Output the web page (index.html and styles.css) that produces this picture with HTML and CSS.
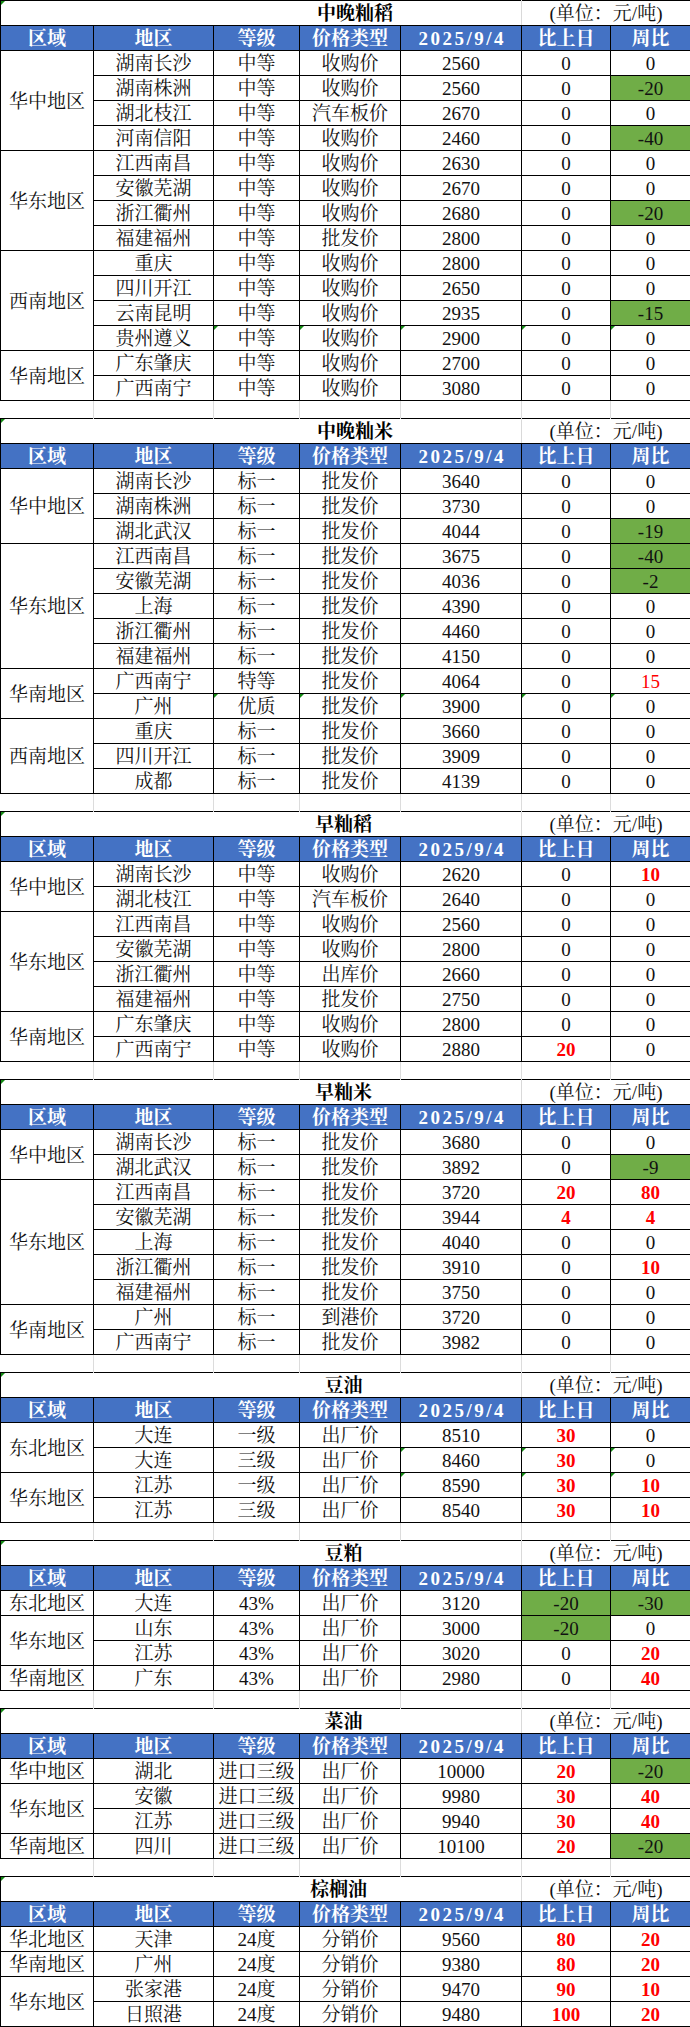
FILE: index.html
```html
<!DOCTYPE html>
<html lang="zh-CN">
<head>
<meta charset="utf-8">
<title>价格表</title>
<link rel="stylesheet" href="styles.css">
</head>
<body>
<table class="sheet">
<colgroup>
<col class="c1"><col class="c2"><col class="c3"><col class="c4"><col class="c5"><col class="c6"><col class="c7">
</colgroup>
<tbody>
<!-- 中晚籼稻 -->
<tr class="title"><td colspan="5" class="ttl w4 t">中晚籼稻</td><td colspan="2" class="unit">(单位：元/吨)</td></tr>
<tr class="head"><th>区域</th><th>地区</th><th>等级</th><th>价格类型</th><th class="dt">2025/9/4</th><th>比上日</th><th>周比</th></tr>
<tr><td rowspan="4">华中地区</td><td>湖南长沙</td><td>中等</td><td>收购价</td><td>2560</td><td>0</td><td>0</td></tr>
<tr><td>湖南株洲</td><td>中等</td><td>收购价</td><td>2560</td><td>0</td><td class="g">-20</td></tr>
<tr><td>湖北枝江</td><td>中等</td><td>汽车板价</td><td>2670</td><td>0</td><td>0</td></tr>
<tr><td>河南信阳</td><td>中等</td><td>收购价</td><td>2460</td><td>0</td><td class="g">-40</td></tr>
<tr><td rowspan="4">华东地区</td><td>江西南昌</td><td>中等</td><td>收购价</td><td>2630</td><td>0</td><td>0</td></tr>
<tr><td>安徽芜湖</td><td>中等</td><td>收购价</td><td>2670</td><td>0</td><td>0</td></tr>
<tr><td>浙江衢州</td><td>中等</td><td>收购价</td><td>2680</td><td>0</td><td class="g">-20</td></tr>
<tr><td>福建福州</td><td>中等</td><td>批发价</td><td>2800</td><td>0</td><td>0</td></tr>
<tr><td rowspan="4">西南地区</td><td>重庆</td><td>中等</td><td>收购价</td><td>2800</td><td>0</td><td>0</td></tr>
<tr><td>四川开江</td><td>中等</td><td>收购价</td><td>2650</td><td>0</td><td>0</td></tr>
<tr><td>云南昆明</td><td>中等</td><td>收购价</td><td>2935</td><td>0</td><td class="g">-15</td></tr>
<tr><td>贵州遵义</td><td class="t">中等</td><td class="t">收购价</td><td class="t">2900</td><td class="t">0</td><td class="t">0</td></tr>
<tr><td rowspan="2">华南地区</td><td>广东肇庆</td><td>中等</td><td>收购价</td><td>2700</td><td>0</td><td>0</td></tr>
<tr><td>广西南宁</td><td>中等</td><td>收购价</td><td>3080</td><td>0</td><td>0</td></tr>
<tr class="gap"><td></td><td></td><td></td><td></td><td></td><td></td><td></td></tr>
<!-- 中晚籼米 -->
<tr class="title"><td colspan="5" class="ttl w4 t">中晚籼米</td><td colspan="2" class="unit">(单位：元/吨)</td></tr>
<tr class="head"><th>区域</th><th>地区</th><th>等级</th><th>价格类型</th><th class="dt">2025/9/4</th><th>比上日</th><th>周比</th></tr>
<tr><td rowspan="3">华中地区</td><td>湖南长沙</td><td>标一</td><td>批发价</td><td>3640</td><td>0</td><td>0</td></tr>
<tr><td>湖南株洲</td><td>标一</td><td>批发价</td><td>3730</td><td>0</td><td>0</td></tr>
<tr><td>湖北武汉</td><td>标一</td><td>批发价</td><td>4044</td><td>0</td><td class="g">-19</td></tr>
<tr><td rowspan="5">华东地区</td><td>江西南昌</td><td>标一</td><td>批发价</td><td>3675</td><td>0</td><td class="g">-40</td></tr>
<tr><td>安徽芜湖</td><td>标一</td><td>批发价</td><td>4036</td><td>0</td><td class="g">-2</td></tr>
<tr><td>上海</td><td>标一</td><td>批发价</td><td>4390</td><td>0</td><td>0</td></tr>
<tr><td>浙江衢州</td><td>标一</td><td>批发价</td><td>4460</td><td>0</td><td>0</td></tr>
<tr><td>福建福州</td><td>标一</td><td>批发价</td><td>4150</td><td>0</td><td>0</td></tr>
<tr><td rowspan="2">华南地区</td><td>广西南宁</td><td>特等</td><td>批发价</td><td>4064</td><td>0</td><td class="rn">15</td></tr>
<tr><td>广州</td><td class="t">优质</td><td class="t">批发价</td><td class="t">3900</td><td class="t">0</td><td class="t">0</td></tr>
<tr><td rowspan="3">西南地区</td><td>重庆</td><td>标一</td><td>批发价</td><td>3660</td><td>0</td><td>0</td></tr>
<tr><td>四川开江</td><td>标一</td><td>批发价</td><td>3909</td><td>0</td><td>0</td></tr>
<tr><td>成都</td><td>标一</td><td>批发价</td><td>4139</td><td>0</td><td>0</td></tr>
<tr class="gap"><td></td><td></td><td></td><td></td><td></td><td></td><td></td></tr>
<!-- 早籼稻 -->
<tr class="title"><td colspan="5" class="ttl t">早籼稻</td><td colspan="2" class="unit">(单位：元/吨)</td></tr>
<tr class="head"><th>区域</th><th>地区</th><th>等级</th><th>价格类型</th><th class="dt">2025/9/4</th><th>比上日</th><th>周比</th></tr>
<tr><td rowspan="2">华中地区</td><td>湖南长沙</td><td>中等</td><td>收购价</td><td>2620</td><td>0</td><td class="r">10</td></tr>
<tr><td>湖北枝江</td><td>中等</td><td>汽车板价</td><td>2640</td><td>0</td><td>0</td></tr>
<tr><td rowspan="4">华东地区</td><td>江西南昌</td><td>中等</td><td>收购价</td><td>2560</td><td>0</td><td>0</td></tr>
<tr><td>安徽芜湖</td><td>中等</td><td>收购价</td><td>2800</td><td>0</td><td>0</td></tr>
<tr><td>浙江衢州</td><td>中等</td><td>出库价</td><td>2660</td><td>0</td><td>0</td></tr>
<tr><td>福建福州</td><td>中等</td><td>批发价</td><td>2750</td><td>0</td><td>0</td></tr>
<tr><td rowspan="2">华南地区</td><td>广东肇庆</td><td>中等</td><td>收购价</td><td>2800</td><td>0</td><td>0</td></tr>
<tr><td>广西南宁</td><td>中等</td><td>收购价</td><td>2880</td><td class="r">20</td><td>0</td></tr>
<tr class="gap"><td></td><td></td><td></td><td></td><td></td><td></td><td></td></tr>
<!-- 早籼米 -->
<tr class="title"><td colspan="5" class="ttl t">早籼米</td><td colspan="2" class="unit">(单位：元/吨)</td></tr>
<tr class="head"><th>区域</th><th>地区</th><th>等级</th><th>价格类型</th><th class="dt">2025/9/4</th><th>比上日</th><th>周比</th></tr>
<tr><td rowspan="2">华中地区</td><td>湖南长沙</td><td>标一</td><td>批发价</td><td>3680</td><td>0</td><td>0</td></tr>
<tr><td>湖北武汉</td><td>标一</td><td>批发价</td><td>3892</td><td>0</td><td class="g">-9</td></tr>
<tr><td rowspan="5">华东地区</td><td>江西南昌</td><td>标一</td><td>批发价</td><td>3720</td><td class="r">20</td><td class="r">80</td></tr>
<tr><td>安徽芜湖</td><td>标一</td><td>批发价</td><td>3944</td><td class="r">4</td><td class="r">4</td></tr>
<tr><td>上海</td><td>标一</td><td>批发价</td><td>4040</td><td>0</td><td>0</td></tr>
<tr><td>浙江衢州</td><td>标一</td><td>批发价</td><td>3910</td><td>0</td><td class="r">10</td></tr>
<tr><td>福建福州</td><td>标一</td><td>批发价</td><td>3750</td><td>0</td><td>0</td></tr>
<tr><td rowspan="2">华南地区</td><td>广州</td><td>标一</td><td>到港价</td><td>3720</td><td>0</td><td>0</td></tr>
<tr><td>广西南宁</td><td>标一</td><td>批发价</td><td>3982</td><td>0</td><td>0</td></tr>
<tr class="gap"><td></td><td></td><td></td><td></td><td></td><td></td><td></td></tr>
<!-- 豆油 -->
<tr class="title"><td colspan="5" class="ttl t">豆油</td><td colspan="2" class="unit">(单位：元/吨)</td></tr>
<tr class="head"><th>区域</th><th>地区</th><th>等级</th><th>价格类型</th><th class="dt">2025/9/4</th><th>比上日</th><th>周比</th></tr>
<tr><td rowspan="2">东北地区</td><td>大连</td><td>一级</td><td>出厂价</td><td>8510</td><td class="r">30</td><td>0</td></tr>
<tr><td>大连</td><td>三级</td><td>出厂价</td><td class="t">8460</td><td class="r t">30</td><td class="t">0</td></tr>
<tr><td rowspan="2">华东地区</td><td>江苏</td><td>一级</td><td>出厂价</td><td class="t">8590</td><td class="r t">30</td><td class="r t">10</td></tr>
<tr><td>江苏</td><td>三级</td><td>出厂价</td><td>8540</td><td class="r">30</td><td class="r">10</td></tr>
<tr class="gap"><td></td><td></td><td></td><td></td><td></td><td></td><td></td></tr>
<!-- 豆粕 -->
<tr class="title"><td colspan="5" class="ttl t">豆粕</td><td colspan="2" class="unit">(单位：元/吨)</td></tr>
<tr class="head"><th>区域</th><th>地区</th><th>等级</th><th>价格类型</th><th class="dt">2025/9/4</th><th>比上日</th><th>周比</th></tr>
<tr><td>东北地区</td><td>大连</td><td>43%</td><td>出厂价</td><td>3120</td><td class="g">-20</td><td class="g">-30</td></tr>
<tr><td rowspan="2">华东地区</td><td>山东</td><td>43%</td><td>出厂价</td><td>3000</td><td class="g">-20</td><td>0</td></tr>
<tr><td>江苏</td><td>43%</td><td>出厂价</td><td>3020</td><td>0</td><td class="r">20</td></tr>
<tr><td>华南地区</td><td>广东</td><td>43%</td><td>出厂价</td><td>2980</td><td>0</td><td class="r">40</td></tr>
<tr class="gap"><td></td><td></td><td></td><td></td><td></td><td></td><td></td></tr>
<!-- 菜油 -->
<tr class="title"><td colspan="5" class="ttl t">菜油</td><td colspan="2" class="unit">(单位：元/吨)</td></tr>
<tr class="head"><th>区域</th><th>地区</th><th>等级</th><th>价格类型</th><th class="dt">2025/9/4</th><th>比上日</th><th>周比</th></tr>
<tr><td>华中地区</td><td>湖北</td><td>进口三级</td><td>出厂价</td><td>10000</td><td class="r">20</td><td class="g">-20</td></tr>
<tr><td rowspan="2">华东地区</td><td>安徽</td><td>进口三级</td><td>出厂价</td><td>9980</td><td class="r">30</td><td class="r">40</td></tr>
<tr><td>江苏</td><td>进口三级</td><td>出厂价</td><td>9940</td><td class="r">30</td><td class="r">40</td></tr>
<tr><td>华南地区</td><td>四川</td><td>进口三级</td><td>出厂价</td><td>10100</td><td class="r">20</td><td class="g">-20</td></tr>
<tr class="gap"><td></td><td></td><td></td><td></td><td></td><td></td><td></td></tr>
<!-- 棕榈油 -->
<tr class="title"><td colspan="5" class="ttl palm t">棕榈油</td><td colspan="2" class="unit">(单位：元/吨)</td></tr>
<tr class="head"><th>区域</th><th>地区</th><th>等级</th><th>价格类型</th><th class="dt">2025/9/4</th><th>比上日</th><th>周比</th></tr>
<tr><td>华北地区</td><td>天津</td><td>24度</td><td>分销价</td><td>9560</td><td class="r">80</td><td class="r">20</td></tr>
<tr><td>华南地区</td><td>广州</td><td>24度</td><td>分销价</td><td>9380</td><td class="r">80</td><td class="r">20</td></tr>
<tr><td rowspan="2">华东地区</td><td>张家港</td><td>24度</td><td>分销价</td><td>9470</td><td class="r">90</td><td class="r">10</td></tr>
<tr><td>日照港</td><td>24度</td><td>分销价</td><td>9480</td><td class="r">100</td><td class="r">20</td></tr>
</tbody>
</table>
</body>
</html>
```
FILE: styles.css
```css
html, body {
  margin: 0;
  padding: 0;
  background: #ffffff;
}

body {
  font-family: "Liberation Serif", "Noto Serif CJK SC", "Noto Sans CJK SC", serif;
  color: #000000;
}

.sheet {
  border-collapse: collapse;
  table-layout: fixed;
  width: 690px;
}

.c1 { width: 93px; }
.c2 { width: 120px; }
.c3 { width: 86px; }
.c4 { width: 101px; }
.c5 { width: 121px; }
.c6 { width: 89px; }
.c7 { width: 80px; }

.sheet td,
.sheet th {
  box-sizing: border-box;
  height: 25px;
  padding: 2px 0 0 0;
  border: 1px solid #000000;
  text-align: center;
  vertical-align: middle;
  font-size: 19px;
  line-height: 20px;
  font-weight: normal;
  color: #111111;
  white-space: nowrap;
  overflow: hidden;
  position: relative;
}

/* title rows */
.sheet .ttl {
  font-size: 19px;
  font-weight: bold;
  color: #000000;
  padding-left: 165px;
  border-right: 1px solid #d9d9d9;
}
.sheet .ttl.w4 { padding-left: 188px; }
.sheet .ttl.palm { padding-left: 155px; }

.sheet .unit {
  border-left: 1px solid #d9d9d9;
  color: #111111;
}

/* header rows */
.sheet .head th {
  background: #4472c4;
  color: #ffffff;
  font-weight: bold;
}
.sheet .head .dt {
  letter-spacing: 2.5px;
  text-indent: 2.5px;
}

/* spacer rows between sections */
.sheet .gap td {
  height: 18px;
  padding: 0;
  border-top: none;
  border-bottom: none;
  border-left: 1px solid #dcdcdc;
  border-right: 1px solid #dcdcdc;
}
.sheet .gap td:first-child { border-left: none; }
.sheet .gap td:last-child { border-right: none; }

/* value highlights */
.sheet .g { background: #70ad47; }
.sheet .r { color: #ff0000; font-weight: bold; }
.sheet .rn { color: #ff0000; }

/* excel error-indicator triangle */
.sheet .t::before {
  content: "";
  position: absolute;
  left: 0;
  top: 0;
  width: 0;
  height: 0;
  border-top: 4px solid #138a13;
  border-right: 4px solid transparent;
}
```
